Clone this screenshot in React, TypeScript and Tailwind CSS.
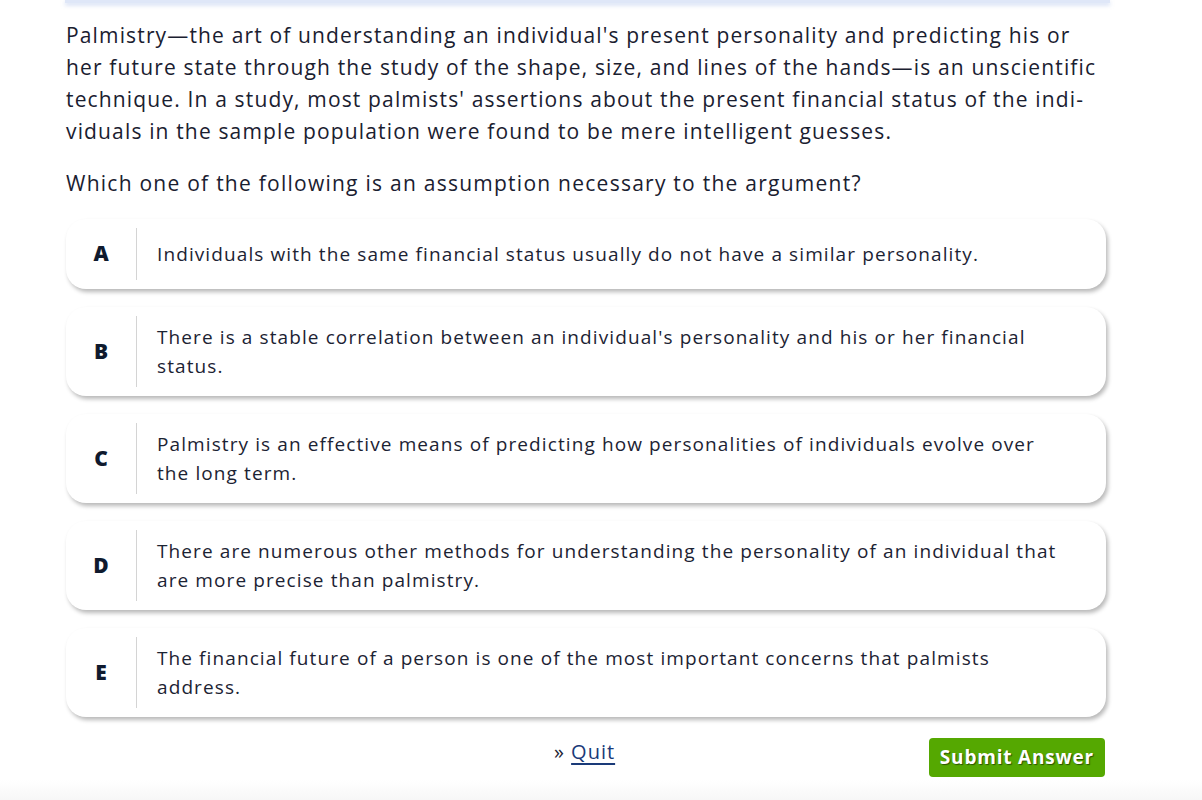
const options = [
  { letter: 'A', text: 'Individuals with the same financial status usually do not have a similar personality.' },
  { letter: 'B', text: "There is a stable correlation between an individual's personality and his or her financial status." },
  { letter: 'C', text: 'Palmistry is an effective means of predicting how personalities of individuals evolve over the long term.' },
  { letter: 'D', text: 'There are numerous other methods for understanding the personality of an individual that are more precise than palmistry.' },
  { letter: 'E', text: 'The financial future of a person is one of the most important concerns that palmists address.' },
]

function Option ({ letter, text }: { letter: string, text: string }) {
  return (
    <button className="flex w-full items-stretch rounded-[20px] bg-white text-left shadow-[2px_3px_4px_rgba(0,0,0,0.28)]">
      <span className="flex w-[70px] flex-none items-center justify-center text-[21px] font-extrabold text-[#0f1a2e]">{letter}</span>
      <span className="my-[9px] w-px flex-none bg-[#d4d4d4]" />
      <span className="flex min-h-[70px] flex-1 items-center pt-[16px] pb-[15px] pl-[20px] pr-[40px] text-[19px] leading-[29px] tracking-[1.1px] text-[#1c2333]">{text}</span>
    </button>
  )
}

export default function App () {
  return (
    <div className="flex min-h-[800px] flex-col bg-white font-['Open_Sans',sans-serif]">
      <div className="ml-[65px] h-[3px] w-[1045px] bg-[#dfe7f8] shadow-[0_2px_4px_rgba(150,175,230,0.5)]" />
      <div className="px-[66px] pt-[16px]">
        <div className="w-[1040px]">
          <p className="text-[21px] leading-[32px] tracking-[1.15px] text-[#1a2030]">
            Palmistry—the art of understanding an individual's present personality and predicting his or her future state through the study of the shape, size, and lines of the hands—is an unscientific technique. In a study, most palmists' assertions about the present financial status of the indi­viduals in the sample population were found to be mere intelligent guesses.
          </p>
          <p className="mt-[20px] text-[21px] leading-[32px] tracking-[1.25px] text-[#1a2030]">
            Which one of the following is an assumption necessary to the argument?
          </p>
          <div className="mt-[20px] flex flex-col gap-[18px]">
            {options.map(o => <Option key={o.letter} letter={o.letter} text={o.text} />)}
          </div>
          <div className="relative mt-[21px] flex h-[39px] items-center justify-end">
            <div className="absolute left-[488px] top-[-1px] text-[20px] tracking-[1px] text-[#1c2333]">
              » <a href="#" className="text-[#1a3a78] underline underline-offset-4">Quit</a>
            </div>
            <button className="mr-[1px] h-[39px] rounded-[4px] bg-[#55a801] px-[11px] text-[19px] font-bold tracking-[0.8px] text-white [text-shadow:1px_1px_1px_rgba(0,0,0,0.5)]">
              Submit Answer
            </button>
          </div>
        </div>
      </div>
      <div className="mt-auto h-[20px] bg-gradient-to-b from-white to-[#f7f7f7]" />
    </div>
  )
}
